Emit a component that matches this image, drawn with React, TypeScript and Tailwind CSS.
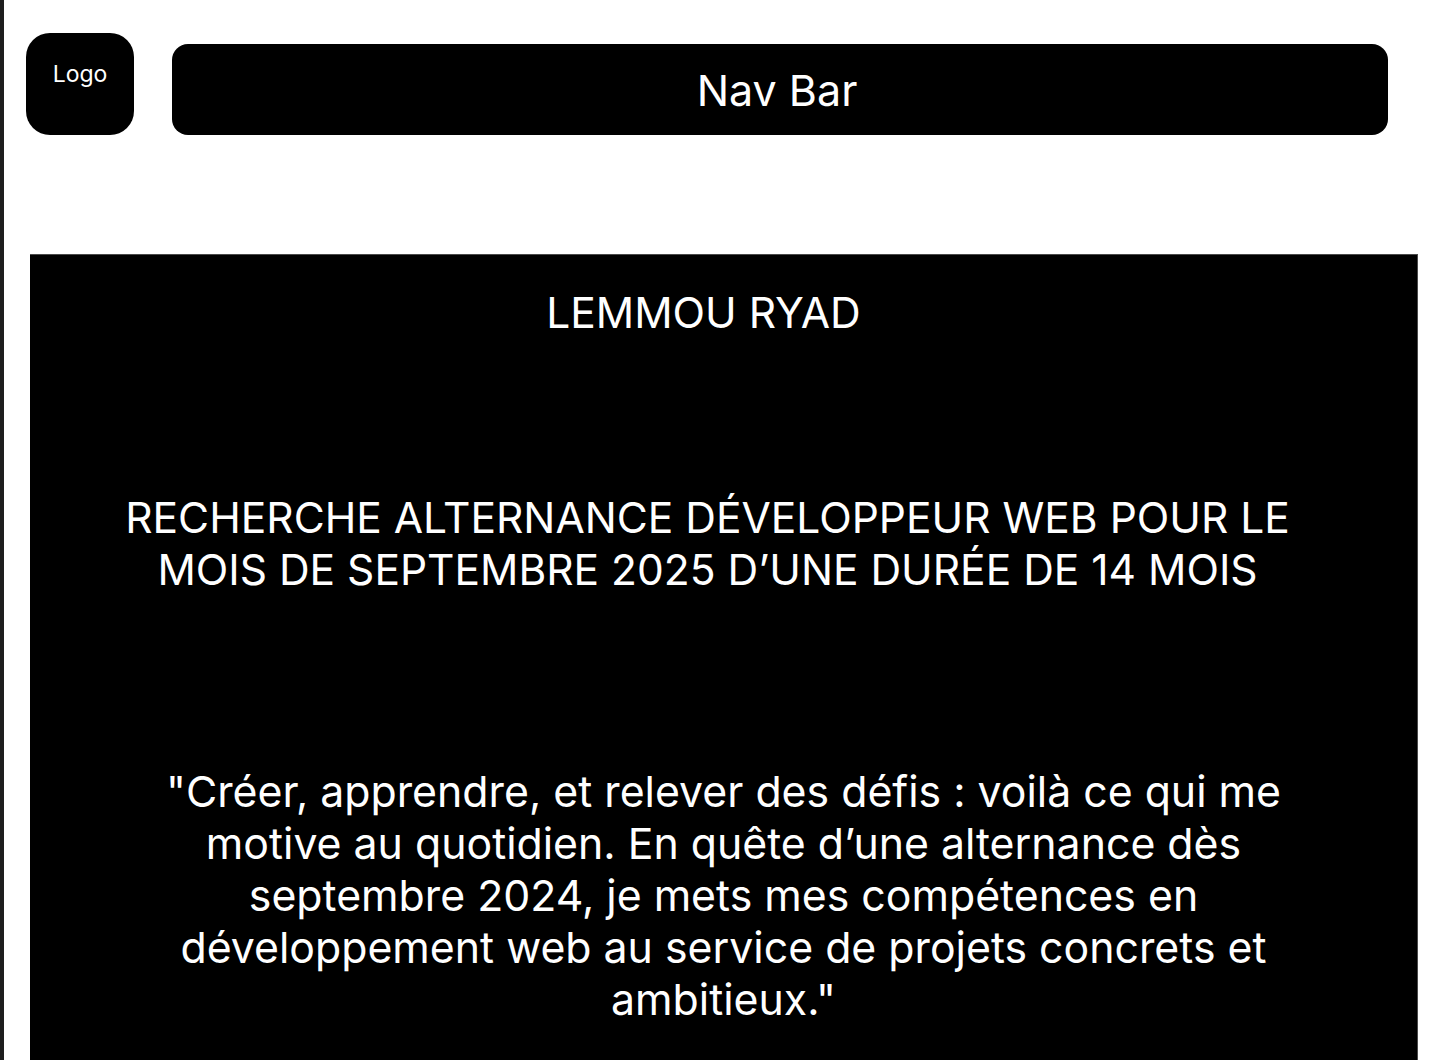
export default function App() {
  return (
    <div className="flex min-h-[1060px] w-full bg-white font-['Inter','Liberation_Sans',sans-serif] text-white">
      {/* bord gauche */}
      <div className="w-[4px] shrink-0 bg-[#1e1e1e]"></div>
      <div className="flex flex-1 flex-col">
        <header className="flex items-start pt-[33px]">
          <div className="ml-[22px] flex h-[102px] w-[108px] justify-center rounded-[24px] bg-black pt-[27px]">
            <p className="text-[23px] leading-[28px]">Logo</p>
          </div>
          <nav className="ml-[38px] mt-[11px] flex h-[91px] w-[1216px] items-center justify-center rounded-[16px] bg-black pr-[6px]">
            <p className="text-[43px] leading-[52px]">Nav Bar</p>
          </nav>
        </header>
        <section className="ml-[26px] mt-[119px] flex w-[1388px] flex-1 flex-col items-center border-t border-r border-[#4a4a4a] bg-black pt-[32px] pb-[40px]">
          <h1 className="pr-[40px] text-[42.5px] leading-[52px]">LEMMOU RYAD</h1>
          <h2 className="mt-[153px] max-w-[1232px] pr-[32px] text-center text-[42.5px] leading-[52px]">
            RECHERCHE ALTERNANCE DÉVELOPPEUR WEB POUR LE MOIS DE SEPTEMBRE 2025 D’UNE DURÉE DE 14 MOIS
          </h2>
          <p className="mt-[170px] max-w-[1180px] text-center text-[42.8px] leading-[52px]">
            "Créer, apprendre, et relever des défis : voilà ce qui me motive au quotidien. En quête d’une alternance dès septembre 2024, je mets mes compétences en développement web au service de projets concrets et ambitieux."
          </p>
        </section>
      </div>
    </div>
  )
}
